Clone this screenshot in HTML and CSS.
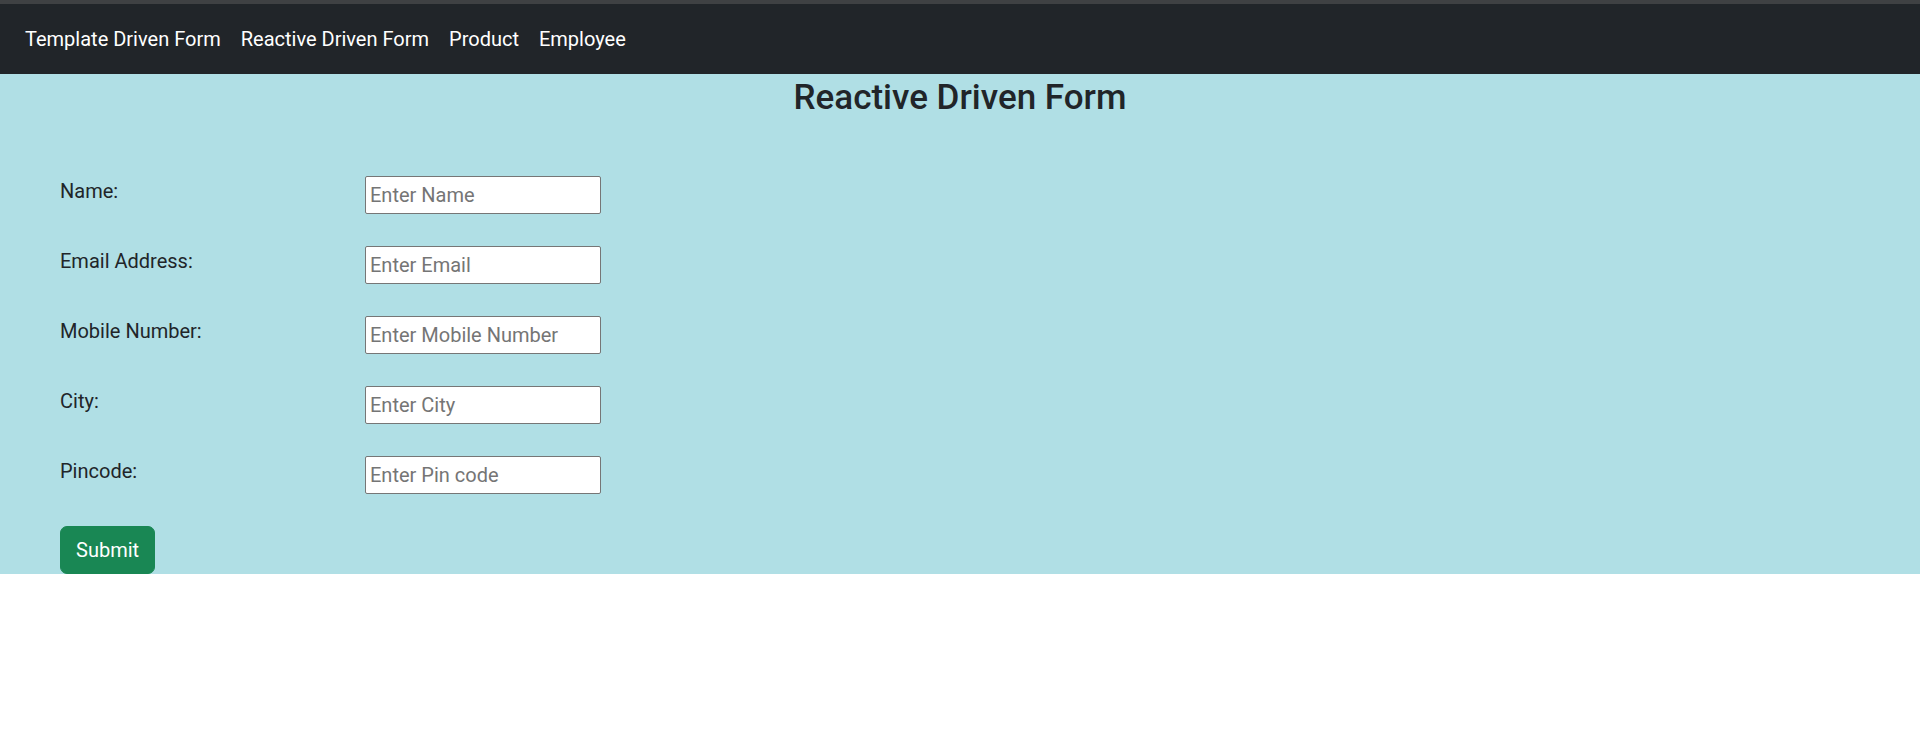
FILE: index.html
```html
<!DOCTYPE html>
<html lang="en">
<head>
<meta charset="utf-8">
<title>Reactive Driven Form</title>
<link rel="stylesheet" href="styles.css">
</head>
<body>
<div class="topbar"></div>
<nav class="navbar">
  <ul class="nav">
    <li><a class="nav-link" href="#">Template Driven Form</a></li>
    <li><a class="nav-link" href="#">Reactive Driven Form</a></li>
    <li><a class="nav-link" href="#">Product</a></li>
    <li><a class="nav-link" href="#">Employee</a></li>
  </ul>
</nav>
<main class="page">
  <h3 class="title">Reactive Driven Form</h3>
  <form class="form">
    <div class="fields">
      <label class="label" for="name">Name:</label>
      <input class="input" id="name" type="text" placeholder="Enter Name">
      <label class="label" for="email">Email Address:</label>
      <input class="input" id="email" type="text" placeholder="Enter Email">
      <label class="label" for="mobile">Mobile Number:</label>
      <input class="input" id="mobile" type="text" placeholder="Enter Mobile Number">
      <label class="label" for="city">City:</label>
      <input class="input" id="city" type="text" placeholder="Enter City">
      <label class="label" for="pin">Pincode:</label>
      <input class="input" id="pin" type="text" placeholder="Enter Pin code">
    </div>
    <button class="btn" type="button">Submit</button>
  </form>
</main>
</body>
</html>
```

FILE: styles.css
```css
* { box-sizing: border-box; }
html, body { margin: 0; padding: 0; background: #ffffff; }
body {
  font-family: Roboto, "Noto Sans", "Liberation Sans", sans-serif;
  font-size: 20px;
  line-height: 30px;
  color: #212529;
}
.topbar {
  height: 4px;
  background: #3f4143;
}
.navbar {
  background: #212529;
  padding: 10px 15px;
}
.nav {
  list-style: none;
  margin: 0;
  padding: 0;
  display: flex;
}
.nav-link {
  display: block;
  padding: 10px 10px;
  color: #ffffff;
  text-decoration: none;
  line-height: 30px;
}
.page {
  background: #b0dfe5;
}
.title {
  margin: 0;
  padding-top: 3px;
  text-align: center;
  font-size: 35px;
  line-height: 42px;
  font-weight: 500;
  color: #212529;
}
.form {
  padding: 57px 0 0 60px;
}
.fields {
  display: grid;
  grid-template-columns: 305px 236px;
  row-gap: 32px;
  align-items: start;
}
.label {
  line-height: 30px;
  color: #212529;
}
.input {
  width: 236px;
  height: 38px;
  margin: 0;
  padding: 1px 4px;
  font-family: inherit;
  font-size: 20px;
  color: #212529;
  background: #ffffff;
  border: 1px solid #767676;
  border-radius: 2px;
}
.input::placeholder { color: #757575; }
.btn {
  display: block;
  margin-top: 32px;
  height: 48px;
  padding: 7px 15px;
  font-family: inherit;
  font-size: 20px;
  line-height: 30px;
  color: #ffffff;
  background: #198754;
  border: 1px solid #198754;
  border-radius: 7px;
  cursor: pointer;
}
```
